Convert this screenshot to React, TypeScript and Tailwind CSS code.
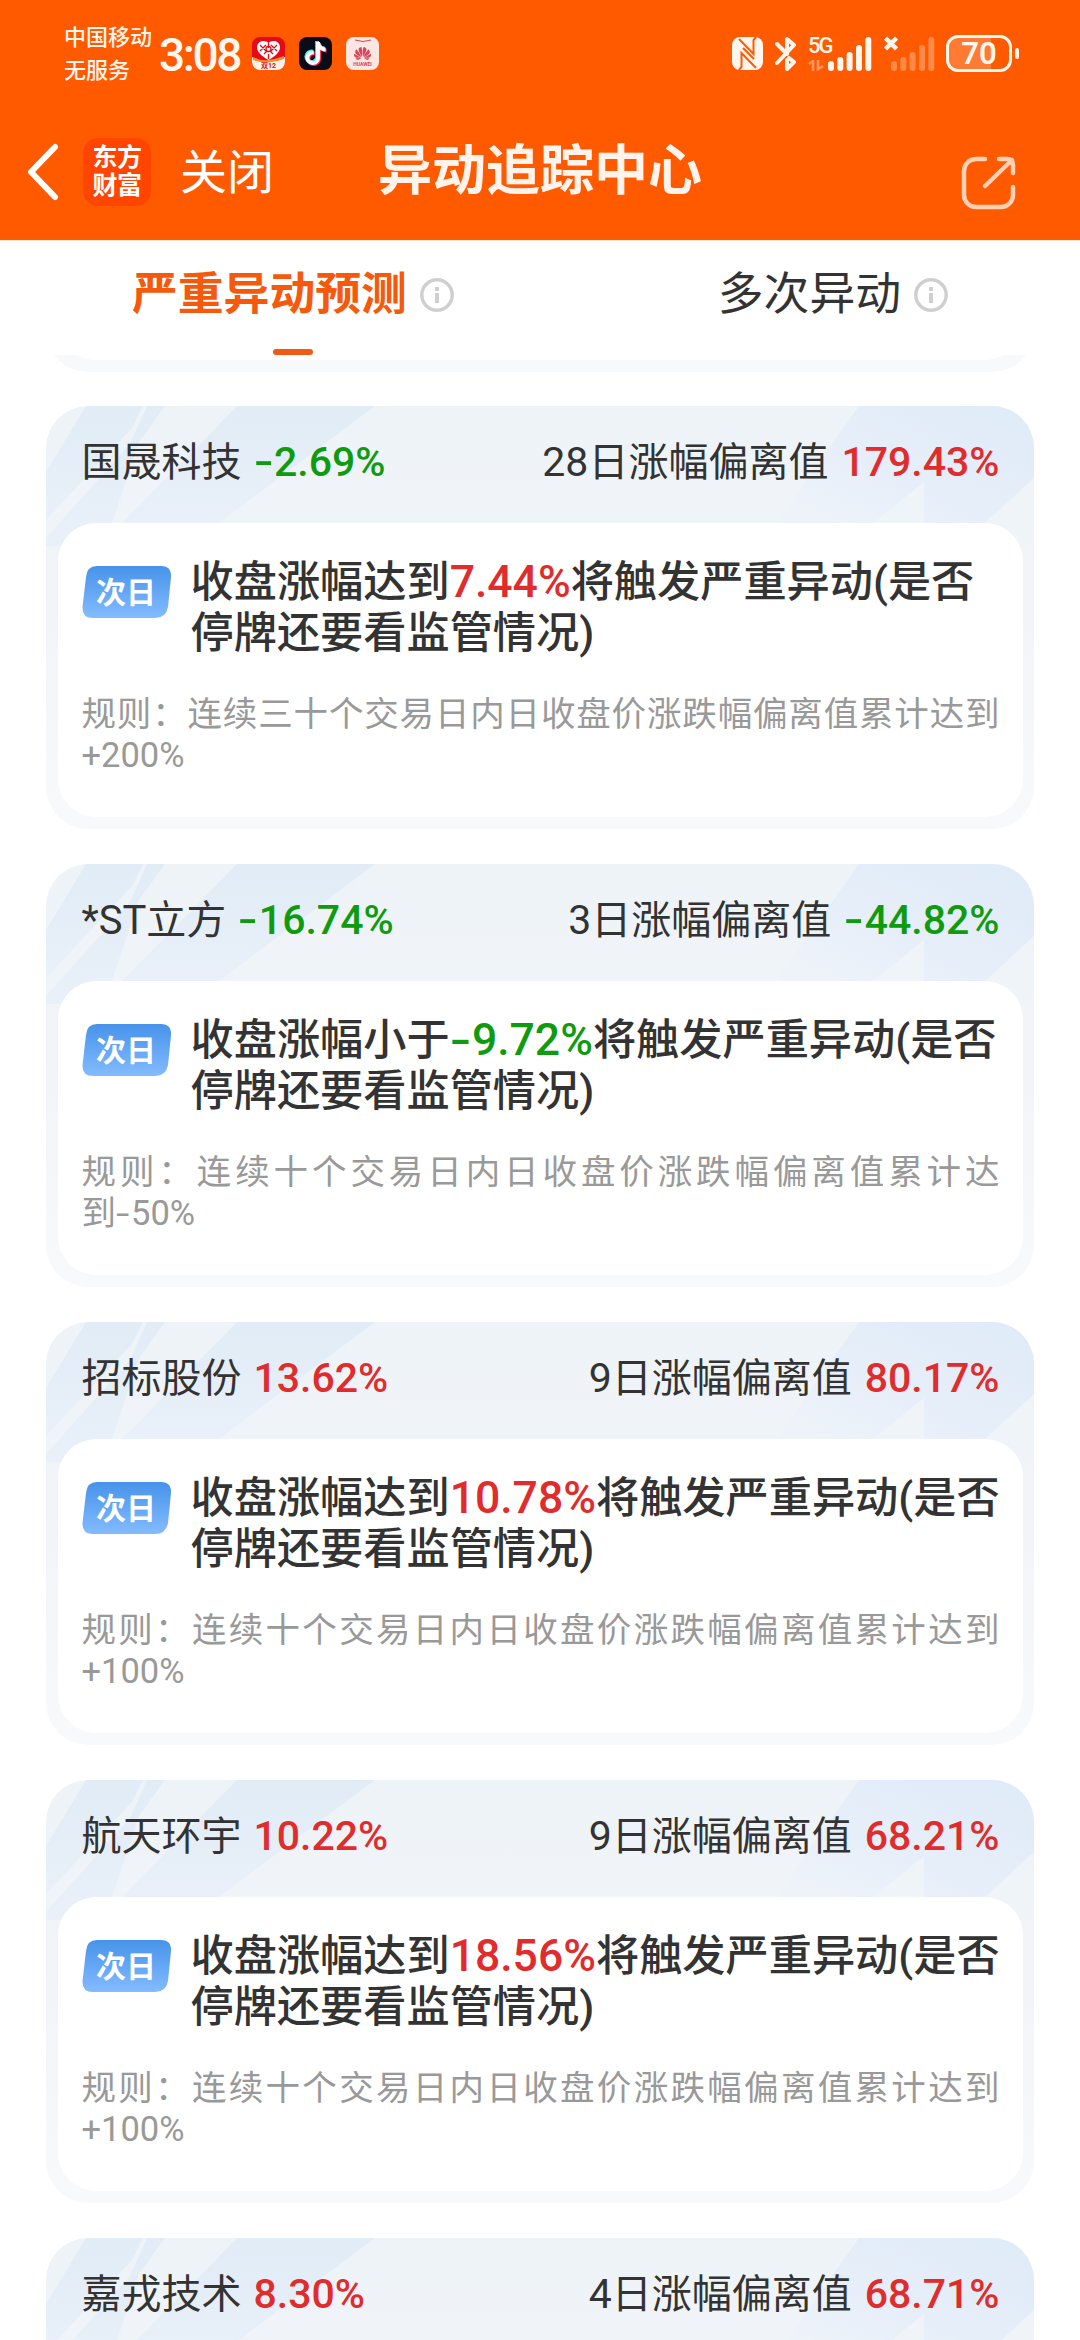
import { FaTiktok } from "react-icons/fa6";
import { SiHuawei } from "react-icons/si";

interface StockAlert {
  name: string;
  change: string;
  days: string;
  deviation: string;
  action: string;
  threshold: string;
  rule: string;
  limit: string;
}

const alerts: StockAlert[] = [
  { name: "国晟科技", change: "-2.69%", days: "28", deviation: "179.43%", action: "达到", threshold: "7.44%", rule: "连续三十个交易日内日收盘价涨跌幅偏离值累计达到", limit: "+200%" },
  { name: "*ST立方", change: "-16.74%", days: "3", deviation: "-44.82%", action: "小于", threshold: "-9.72%", rule: "连续十个交易日内日收盘价涨跌幅偏离值累计达", limit: "到-50%" },
  { name: "招标股份", change: "13.62%", days: "9", deviation: "80.17%", action: "达到", threshold: "10.78%", rule: "连续十个交易日内日收盘价涨跌幅偏离值累计达到", limit: "+100%" },
  { name: "航天环宇", change: "10.22%", days: "9", deviation: "68.21%", action: "达到", threshold: "18.56%", rule: "连续十个交易日内日收盘价涨跌幅偏离值累计达到", limit: "+100%" },
  { name: "嘉戎技术", change: "8.30%", days: "4", deviation: "68.71%", action: "达到", threshold: "10.00%", rule: "连续十个交易日内日收盘价涨跌幅偏离值累计达到", limit: "+100%" },
];

const trendColor = (value: string) => (value.startsWith("-") ? "text-[#0f9b0f]" : "text-[#e02c2c]");

// Roboto's hyphen is too short for a minus sign, so it gets stretched
const Value = ({ value }: { value: string }) => {
  const [head, tail] = value.split("-");
  if (tail === undefined) return <span className="whitespace-nowrap">{value}</span>;
  return (
    <span className="whitespace-nowrap">
      {head}
      <span className="mr-[0.16em] inline-block origin-left scale-x-[1.4]">-</span>
      {tail}
    </span>
  );
};

const SignalBars = () => (
  <svg width="44" height="36" viewBox="0 0 44 36" fill="currentColor">
    <rect x="0" y="25" width="6" height="10" rx="3" />
    <rect x="9.3" y="21" width="6" height="14" rx="3" />
    <rect x="18.6" y="16" width="6" height="19" rx="3" />
    <rect x="28" y="9" width="6" height="26" rx="3" />
    <rect x="37.3" y="1" width="6" height="34" rx="3" />
  </svg>
);

const StatusBar = () => (
  <div className="flex h-[107px] items-center pl-16 pr-[61px] text-[#fff6ee]">
    <div className="w-[95px] text-[22px] leading-[33px] font-medium">
      <div>中国移动</div>
      <div>无服务</div>
    </div>
    <div className="w-[93px] pt-[2px] text-[46px] leading-none font-medium tracking-[-2.4px]">3:08</div>

    <div className="flex gap-[14px]">
      {/* Shopping app */}
      <svg width="33" height="33" viewBox="0 0 33 33">
        <rect width="33" height="33" rx="8" fill="#e60a18" />
        <path d="M0 20q8 5 16.500 4T33 20v5a8 8 0 0 1-8 8H8a8 8 0 0 1-8-8z" fill="#fff1e6" />
        <path d="M1 20q8 4 15.500 3T32 19v3q-7 3-15.500 3.500T1 23z" fill="#f5902f" />
        <path d="M16.500 23C9 19 4.500 14 5 9.500 6 3.500 13 2.500 16.500 6 20 2.500 27 3.500 28 9.500 28.500 14 24 19 16.500 23z" fill="#fff" />
        <path d="M8 8l6 6m-6 0l6-6m5 0l6 6m-6 0l6-6M16.500 6v5m0 6v5M12 17l3-3m6 3l-3-3" stroke="#e60a18" strokeWidth="1.300" />
        <circle cx="16.500" cy="12" r="2.500" fill="none" stroke="#e60a18" strokeWidth="1.300" />
        <text x="16.500" y="31" textAnchor="middle" fontSize="7" fontWeight="700" fill="#d8121c">双12</text>
      </svg>
      <span className="relative flex size-[33px] items-center justify-center rounded-lg bg-[#0c0b18]">
        <FaTiktok size={23} className="absolute top-[4px] left-[4px] text-[#25f4ee]" />
        <FaTiktok size={23} className="absolute top-[6px] left-[6px] text-[#fe2c55]" />
        <FaTiktok size={23} className="absolute top-[5px] left-[5px] text-white" />
      </span>
      <span className="flex size-[33px] flex-col items-center rounded-lg bg-[#fbe6e2] text-[#d8455c]">
        <svg width="18" height="7" viewBox="0 0 18 7" fill="none" stroke="currentColor">
          <path d="M1 3q8 3 16 0" />
        </svg>
        <SiHuawei size={17} className="mt-[1px]" />
        <span className="text-[5px] leading-[5px] font-bold">HUAWEI</span>
      </span>
    </div>

    <div className="ml-auto flex items-center">
      {/* NFC */}
      <svg width="31" height="33" viewBox="0 0 31 33">
        <rect width="31" height="33" rx="8" fill="currentColor" />
        <path d="M7 2l14.500 15V3l2.500-3M24 31L9.500 16v14L7 33M11 11l11 11" fill="none" stroke="#ff5a00" strokeWidth="2" />
      </svg>
      {/* Bluetooth */}
      <svg className="ml-3" width="22" height="36" viewBox="0 0 22 36" fill="none" stroke="currentColor" strokeWidth="4" strokeLinecap="round" strokeLinejoin="round">
        <path d="M2 8l10 10M2 27L19 9l-7-6v11M14 22l5 4-7 7V24" />
      </svg>
      <div className="ml-[11px] flex h-9 w-5 flex-col">
        <span className="text-[22px] leading-[19px] font-medium tracking-[-2px]">5G</span>
        <svg className="mt-[5px] opacity-40" width="16" height="11" viewBox="0 0 16 11" fill="none" stroke="currentColor" strokeWidth="2.600">
          <path d="M1 4l4-3v10M10 0v9l5-3" />
        </svg>
      </div>
      <SignalBars />
      <div className="ml-[19px] h-9 opacity-30">
        <SignalBars />
      </div>
      <svg className="-ml-[51px] mb-[20px]" width="14" height="15" viewBox="0 0 14 15" stroke="currentColor" strokeWidth="4.500">
        <path d="M1.500 2l11 11M12.500 2l-11 11" />
      </svg>
      {/* Battery */}
      <div className="relative ml-[48px] flex h-[37px] w-[66px] items-center justify-center rounded-[12px] border-[3px] border-current">
        <div className="absolute inset-y-0 left-0 w-[42px] rounded-l-[9px] bg-white/20" />
        <span className="relative text-[31px] leading-none font-semibold">70</span>
      </div>
      <div className="ml-[3px] h-[11px] w-[4px] rounded-sm bg-current" />
    </div>
  </div>
);

const NavBar = () => (
  <div className="flex h-[133px] items-center pb-[3px] pl-[26px] pr-[64px] text-white">
    <svg width="34" height="58" viewBox="0 0 34 58" fill="none" stroke="currentColor" strokeWidth="6" strokeLinecap="round" strokeLinejoin="round">
      <path d="M29 4L5 29l24 25" />
    </svg>
    <div className="ml-[23px] flex size-[68px] flex-col items-center justify-center rounded-[15px] bg-[#ff4500] text-[25px] leading-[28px] font-bold tracking-[-0.500px]">
      <span>东方</span>
      <span>财富</span>
    </div>
    <span className="ml-[29px] text-[47px] leading-none">关闭</span>
    <h1 className="ml-[104px] text-[54px] leading-none font-bold text-[#fff3ec]">异动追踪中心</h1>
    <svg className="mt-[22px] ml-auto" width="55" height="54" viewBox="0 0 55 54" fill="none" stroke="#ffd0b3" strokeWidth="4.500" strokeLinecap="round" strokeLinejoin="round">
      <path d="M24 3H15A12 12 0 0 0 3 15v24a12 12 0 0 0 12 12h25a12 12 0 0 0 12-12v-8M38 3h8q6 0 6 6v8M51 4L24 30" />
    </svg>
  </div>
);

const InfoIcon = () => (
  <svg width="34" height="34" viewBox="0 0 34 34" fill="none" stroke="#cfcfcf" strokeWidth="3.400">
    <circle cx="17" cy="17" r="15.200" />
    <path d="M17 15v10M17 9v4" strokeWidth="4" />
  </svg>
);

const Tabs = () => (
  <div className="flex h-[115px] flex-col border-t border-[#ffe8d0] bg-white">
    <div className="flex h-[108px] items-center pr-[132px] pl-[132px] text-[45.800px] leading-none">
      <span className="font-bold text-[#f55a0c]">严重异动预测</span>
      <span className="ml-[13px]"><InfoIcon /></span>
      <span className="ml-auto text-[#333]">多次异动</span>
      <span className="ml-[13px]"><InfoIcon /></span>
    </div>
    <div className="ml-[273px] h-[6px] w-[40px] rounded-full bg-[#f05a14]" />
  </div>
);

const CardBackdrop = () => (
  <svg className="absolute inset-0" width="988" height="423" viewBox="0 0 988 423">
    <defs>
      <linearGradient id="base" x1="0" y1="0" x2="0" y2="1">
        <stop offset="0" stopColor="#eef3f8" />
        <stop offset="0.5" stopColor="#f1f5f9" />
        <stop offset="1" stopColor="#f8f9fb" />
      </linearGradient>
      <linearGradient id="beam" x1="0" y1="0" x2="0" y2="1">
        <stop offset="0" stopColor="#e1ecf6" />
        <stop offset="1" stopColor="#e9f0f9" />
      </linearGradient>
      <linearGradient id="glow" x1="0" y1="1" x2="1" y2="0">
        <stop offset="0.1" stopColor="#eef3f9" />
        <stop offset="0.45" stopColor="#e6eef9" />
        <stop offset="1" stopColor="#dfebf8" />
      </linearGradient>
    </defs>
    <rect width="988" height="423" fill="url(#base)" />
    <path d="M40 0H97L86 22L0 114V66z" fill="url(#beam)" />
    <path d="M101 0H119L93 36L66 117L50 140H0V132L84 38z" fill="url(#beam)" />
    <path d="M191 0H329L173 117H76z" fill="url(#beam)" />
    <path d="M813 0H988V72L939 117H878V76L827 117H731L766 66z" fill="url(#glow)" />
  </svg>
);

const AlertCard = ({ alert }: { alert: StockAlert }) => (
  <section className="relative h-[423px] shrink-0 overflow-hidden rounded-[42px]">
    <CardBackdrop />
    <div className="relative flex h-full flex-col px-[11.500px] pb-3">
      <div className="flex h-[117px] items-center justify-between pr-[23px] pb-[4px] pl-6 text-[40px] text-[#333]">
        <div className="flex items-baseline gap-3">
          <span>{alert.name}</span>
          <span className={`text-[41px] font-medium ${trendColor(alert.change)}`}>
            <Value value={alert.change} />
          </span>
        </div>
        <div className="flex items-baseline gap-[13px]">
          <span>
            <span className="text-[41px] leading-none">{alert.days}</span>日涨幅偏离值
          </span>
          <span className={`text-[41px] font-medium ${trendColor(alert.deviation)}`}>
            <Value value={alert.deviation} />
          </span>
        </div>
      </div>

      <div className="flex-1 rounded-[38px] bg-white px-6 pt-[34px]">
        <div className="flex">
          <svg className="mt-[9px] shrink-0" width="89" height="52" viewBox="0 0 89 52">
            <defs>
              <linearGradient id="tag" x1="0" y1="0" x2="0" y2="1">
                <stop offset="0" stopColor="#4793ea" />
                <stop offset="1" stopColor="#83bbff" />
              </linearGradient>
            </defs>
            <path d="M15 0H79Q90 0 89 11L86 41Q84 52 73 52H11Q0 52 .500 41L4 11Q5 0 15 0z" fill="url(#tag)" />
            <text x="44" y="37" textAnchor="middle" fontSize="30" fontWeight="700" fill="#fff">次日</text>
          </svg>
          <p className="ml-[20px] text-[43.200px] leading-[51px] font-medium whitespace-nowrap text-[#333]">
            收盘涨幅{alert.action}
            <span className={`text-[44.500px] leading-none ${trendColor(alert.threshold)}`}>
              <Value value={alert.threshold} />
            </span>
            将触发严重异动(是否
            <br />
            停牌还要看监管情况)
          </p>
        </div>
        <p className="mt-[35px] mr-[-1px] text-justify text-[34.500px] leading-[40.500px] text-[#999]">
          规则：{alert.rule}
          <Value value={alert.limit} />
        </p>
      </div>
    </div>
  </section>
);

export default function App() {
  return (
    <div className="flex h-[2340px] w-[1080px] flex-col overflow-hidden bg-white font-['Roboto','Noto_Sans_CJK_SC',sans-serif]">
      <header className="bg-[#ff5a00]">
        <StatusBar />
        <NavBar />
      </header>
      <Tabs />
      <main className="flex flex-1 flex-col overflow-hidden px-[46px]">
        {/* Tail of the card scrolled under the tabs */}
        <div className="mb-[34px] flex h-[17px] shrink-0 flex-col justify-end overflow-hidden">
          <div className="h-[84px] shrink-0 rounded-b-[42px] bg-[#f7f9fb] px-[11.500px] pb-3">
            <div className="h-full rounded-b-[38px] bg-white" />
          </div>
        </div>
        <div className="flex flex-col gap-[35px]">
          {alerts.map((alert) => (
            <AlertCard key={alert.name} alert={alert} />
          ))}
        </div>
      </main>
    </div>
  );
}
